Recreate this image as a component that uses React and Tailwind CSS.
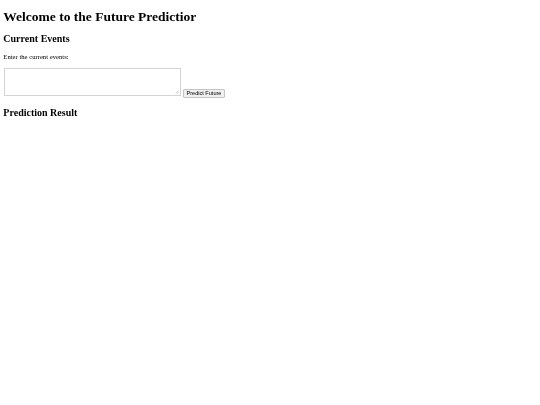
export default function App() {
  return (
    <div className="min-h-[405px] w-[540px] bg-white px-[3.33px] pt-[8.93px] text-black antialiased will-change-transform" style={{ fontFamily: '"Liberation Serif", "Times New Roman", serif' }}>
      <h1 className="m-0 text-[13.5px] font-bold leading-[15.33px]">Welcome to the Future Predictior</h1>
      <h2 className="mt-[8.93px] text-[10px] font-bold leading-[11.5px]">Current Events</h2>
      <p className="mt-[8.3px] text-[6.67px] leading-[7.67px]">Enter the current events:</p>
      <div className="mt-[7.34px] flex items-start">
        <div className="relative ml-[0.67px] h-[28px] w-[177px] border border-[#d4d4d4] bg-white">
          <svg className="absolute bottom-[1px] right-[1px]" width="4" height="4" viewBox="0 0 4 4">
            <path d="M0.5 3.5 L3.5 0.5 M2 3.5 L3.5 2" stroke="#b0b0b0" strokeWidth="0.6" fill="none" />
          </svg>
        </div>
        <button className="ml-[2px] mt-[21px] flex h-[9px] w-[42px] items-center justify-center rounded-[1px] border border-[#c4c4c4] bg-[#efefef] p-0 text-[5.56px] leading-none text-black" style={{ fontFamily: '"Liberation Sans", Arial, sans-serif' }}>
          Predict Future
        </button>
      </div>
      <h2 className="mt-[9.3px] text-[10px] font-bold leading-[11.5px]">Prediction Result</h2>
    </div>
  );
}
